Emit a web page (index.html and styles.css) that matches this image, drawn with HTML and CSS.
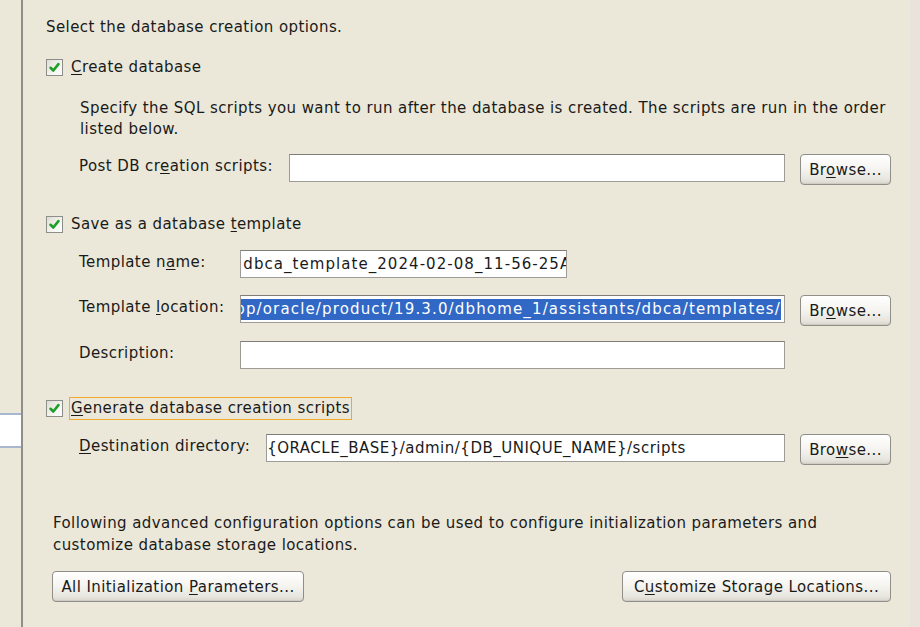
FILE: index.html
```html
<!DOCTYPE html>
<html>
<head>
<meta charset="utf-8">
<link rel="stylesheet" href="styles.css">
</head>
<body>
<div class="window">
  <aside class="sidebar">
    <div class="nav-selected"></div>
  </aside>
  <main class="content">
    <p class="intro">Select the database creation options.</p>

    <label class="check-row row-create">
      <span class="checkbox"><svg viewBox="0 0 16 16" width="16" height="16"><path d="M3.8 8.3 L6.7 11.2 L12.2 4.4" fill="none" stroke="#1f9e2a" stroke-width="2.8" stroke-linecap="round" stroke-linejoin="round"/></svg></span>
      <span class="check-label"><u>C</u>reate database</span>
    </label>

    <div class="indent">
      <p class="help">Specify the SQL scripts you want to run after the database is created. The scripts are run in the order listed below.</p>
      <div class="field-row row-post">
        <span class="field-label">Post DB cr<u>e</u>ation scripts:</span>
        <span class="input grow"></span>
        <button class="btn browse">Br<u>o</u>wse...</button>
      </div>
    </div>

    <label class="check-row row-save">
      <span class="checkbox"><svg viewBox="0 0 16 16" width="16" height="16"><path d="M3.8 8.3 L6.7 11.2 L12.2 4.4" fill="none" stroke="#1f9e2a" stroke-width="2.8" stroke-linecap="round" stroke-linejoin="round"/></svg></span>
      <span class="check-label">Save as a database <u>t</u>emplate</span>
    </label>

    <div class="indent template-grid">
      <span class="field-label">Template n<u>a</u>me:</span>
      <div class="cell"><span class="input name-input"><span class="input-text">dbca_template_2024-02-08_11-56-25AM.dbt</span></span></div>

      <span class="field-label">Template <u>l</u>ocation:</span>
      <div class="cell"><span class="input grow scrolled"><span class="selected-text">/u01/app/oracle/product/19.3.0/dbhome_1/assistants/dbca/templates/</span></span><button class="btn browse">Br<u>o</u>wse...</button></div>

      <span class="field-label desc-label">Description:</span>
      <div class="cell desc-cell"><span class="input desc-input"></span></div>
    </div>

    <label class="check-row row-gen">
      <span class="checkbox"><svg viewBox="0 0 16 16" width="16" height="16"><path d="M3.8 8.3 L6.7 11.2 L12.2 4.4" fill="none" stroke="#1f9e2a" stroke-width="2.8" stroke-linecap="round" stroke-linejoin="round"/></svg></span>
      <span class="check-label focused"><u>G</u>enerate database creation scripts</span>
    </label>

    <div class="indent">
      <div class="field-row row-dest">
        <span class="field-label"><u>D</u>estination directory:</span>
        <span class="input grow dest-input"><span class="input-text">{ORACLE_BASE}/admin/{DB_UNIQUE_NAME}/scripts</span></span>
        <button class="btn browse">Bro<u>w</u>se...</button>
      </div>
    </div>

    <section class="advanced">
      <p class="adv-text">Following advanced configuration options can be used to configure initialization parameters and customize database storage locations.</p>
      <div class="adv-buttons">
        <button class="btn wide-left">All Initialization <u>P</u>arameters...</button>
        <button class="btn wide-right">C<u>u</u>stomize Storage Locations...</button>
      </div>
    </section>
  </main>
  <div class="right-strip"></div>
</div>
</body>
</html>
```

FILE: styles.css
```css
* { box-sizing: border-box; }

html, body {
  margin: 0;
  padding: 0;
  width: 920px;
  height: 627px;
  overflow: hidden;
  background: #ebe8d9;
  font-family: "DejaVu Sans", "Liberation Sans", sans-serif;
  font-size: 15px;
  letter-spacing: 0.42px;
  color: #1a1a1a;
}

u { text-decoration: underline; text-underline-offset: 2px; }

.window {
  display: flex;
  width: 920px;
  height: 627px;
}

.sidebar {
  width: 23px;
  flex: none;
  border-right: 2px solid #8f8e88;
  padding-top: 413px;
}

.nav-selected {
  height: 35px;
  background: #ffffff;
  border-top: 2px solid #a9b6d0;
  border-bottom: 2px solid #a9b6d0;
}

.content {
  flex: 1;
  min-width: 0;
  padding: 17px 19px 0 23px;
}

.right-strip {
  width: 10px;
  flex: none;
  background: #e9e3dc;
}

p { margin: 0; }

.intro {
  line-height: 20px;
}

.check-row {
  display: flex;
  align-items: center;
  gap: 6px;
  height: 24px;
}

.row-create { margin-top: 18px; }
.row-save { margin-top: 27px; }
.row-gen { margin-top: 27px; }

.checkbox {
  width: 17px;
  height: 17px;
  flex: none;
  border: 1px solid #8d8d8a;
  background: linear-gradient(135deg, #deddd5 0%, #f3f3ee 55%, #ffffff 100%);
  display: flex;
  align-items: center;
  justify-content: center;
}
.checkbox svg { display: block; width: 15px; height: 15px; }

.check-label {
  line-height: 21px;
  padding: 0 1px;
  border: 1px solid transparent;
}
.check-label.focused {
  border-color: #f2a72e;
}

.indent {
  padding-left: 33px;
}

.help {
  margin-top: 19px;
  padding-left: 1px;
  line-height: 21px;
  max-width: 820px;
}

.field-row {
  display: flex;
  align-items: flex-start;
  gap: 15px;
}

.row-post { margin-top: 14px; }
.row-dest { margin-top: 14px; }

.field-label {
  line-height: 24px;
  white-space: nowrap;
}
.field-row .field-label { margin-right: 1px; }

.input {
  display: flex;
  align-items: center;
  height: 28px;
  background: #ffffff;
  border: 1px solid #9c9b95;
  border-top-color: #7e7d78;
  overflow: hidden;
  white-space: nowrap;
  padding: 0 2px;
}
.grow { flex: 1; min-width: 0; }
.dest-input { padding-left: 0; }
.dest-input .input-text { letter-spacing: 0.5px; }

.input-text { line-height: 24px; }

.name-input .input-text { letter-spacing: 1.05px; }

.scrolled {
  justify-content: flex-end;
  padding: 0 3px 0 1px;
}
.selected-text {
  flex: none;
  background: #3168c5;
  color: #ffffff;
  line-height: 21px;
  letter-spacing: 1.15px;
}

.btn {
  flex: none;
  height: 31px;
  font-family: inherit;
  font-size: 15px;
  letter-spacing: 0.42px;
  color: #1a1a1a;
  border: 1px solid #8f8e89;
  border-radius: 4px;
  background: linear-gradient(#ffffff 0%, #f6f5f1 45%, #e7e5de 85%, #d8d5cc 100%);
  box-shadow: inset 0 -1px 0 #cfccc3;
  padding: 0 4px;
  cursor: default;
}

.browse { width: 91px; }

.template-grid {
  margin-top: 14px;
  display: grid;
  grid-template-columns: max-content minmax(0, 1fr);
  column-gap: 16px;
  row-gap: 17px;
  align-items: start;
}
.template-grid .cell {
  display: flex;
  gap: 15px;
  align-items: flex-start;
  height: 28px;
  min-width: 0;
}
.template-grid .field-label { line-height: 24px; }
.desc-label, .desc-cell { margin-top: 1px; }
.name-input { width: 327px; }
.desc-input { width: 545px; }

.advanced {
  margin-top: 47px;
  padding-left: 6px;
}

.adv-text {
  padding-left: 1px;
  line-height: 22px;
  max-width: 800px;
}

.adv-buttons {
  margin-top: 15px;
  display: flex;
  justify-content: space-between;
}
.wide-left { width: 252px; }
.wide-right { width: 269px; }
```
